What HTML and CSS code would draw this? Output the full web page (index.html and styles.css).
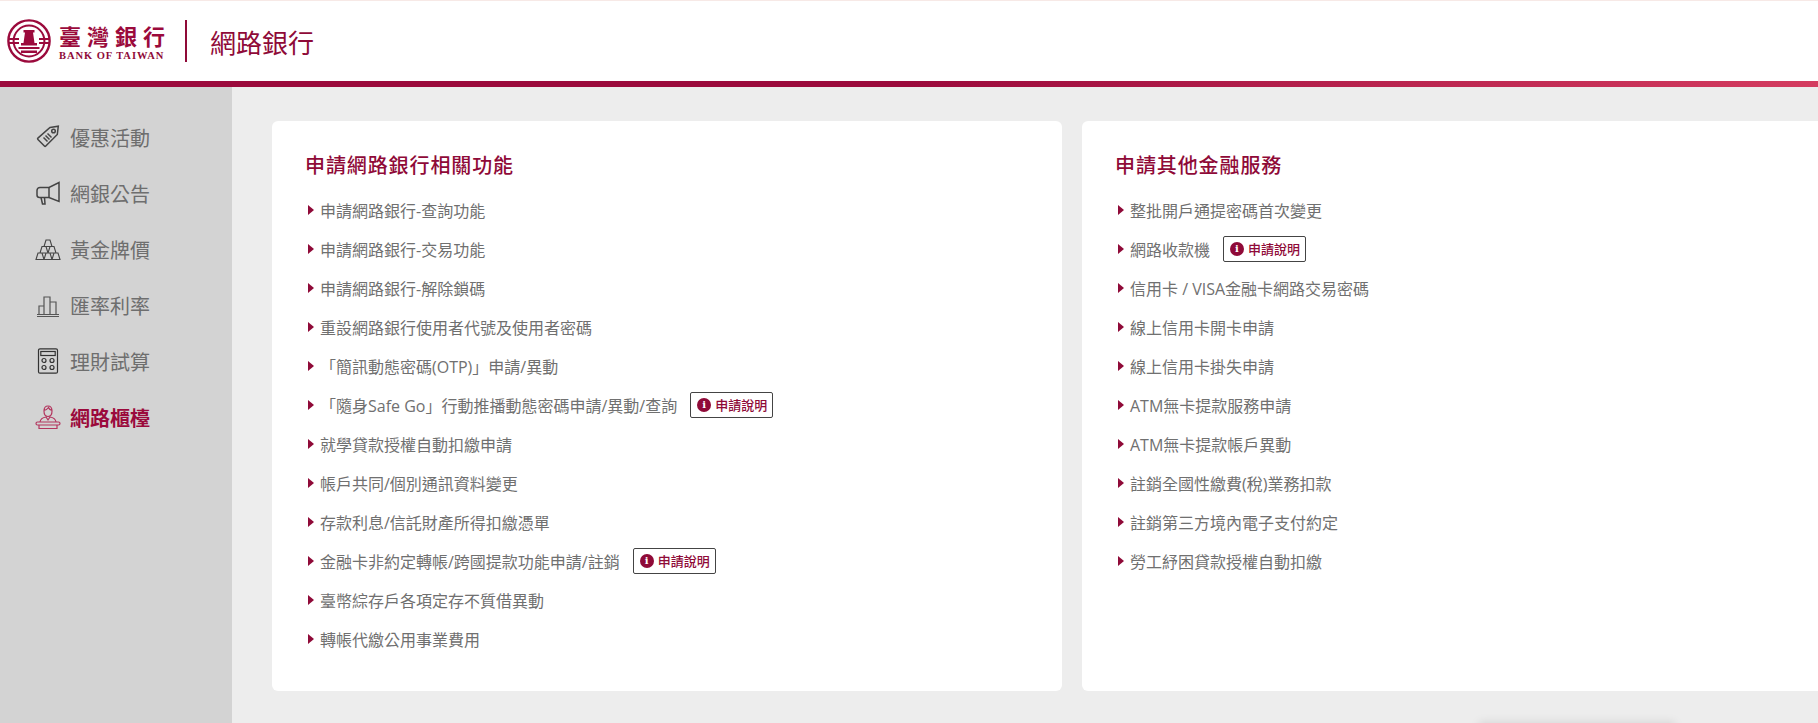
FILE: index.html
```html
<!DOCTYPE html>
<html lang="zh-Hant">
    <head>
        <meta charset="UTF-8">
        <meta name="viewport" content="width=device-width, initial-scale=1">
        <title>網路銀行</title>
        <link rel="stylesheet" href="styles.css">
    </head>
    <body>
        <header class="topbar">
            <div class="logo">
                <svg class="logo-mark" viewBox="0 0 44 44" fill="none" stroke="#9b0a3c">
                    <circle cx="22" cy="22" r="20.6" stroke-width="2.4"/>
                    <circle cx="22" cy="22" r="15.4" stroke-width="2"/>
                    <path d="M16.500 11h11v2.500h-1.500l1.500 10.500h2.500v2.500h-16v-2.500h2.500l1.500-10.500h-1.500z" fill="#9b0a3c" stroke="none"/>
                    <path d="M11.500 29h21M2 20h10M2 24h10M32 20h10M32 24h10" stroke-width="1.800"/>
                    <path d="M14 31.500h16v2.500h-16z" fill="#9b0a3c" stroke="none"/>
                </svg>
                <div class="logo-text">
                    <div class="logo-zh">臺灣銀行</div>
                    <div class="logo-en">BANK OF TAIWAN</div>
                </div>
            </div>
            <div class="topbar-title">網路銀行</div>
        </header>
        <div class="stripe"></div>
        <div class="layout">
            <nav class="sidebar">
                <a class="nav-item">
                    <svg class="nav-icon" viewBox="0 0 26 26" fill="none" stroke="#444" stroke-width="1.500">
                        <path d="M15 3.500l8.300-1.300-1 8.300-11.500 11.500a1 1 0 0 1-1.400 0l-6.500-6.500a1 1 0 0 1 0-1.400z"/>
                        <circle cx="18.500" cy="7" r="1.800"/>
                        <path d="M8.500 13.500l4 4M10.500 11.500l4 4M12.500 9.500l4 4"/>
                    </svg>
                    <span>優惠活動</span>
                </a>
                <a class="nav-item">
                    <svg class="nav-icon" viewBox="0 0 26 26" fill="none" stroke="#444" stroke-width="1.500">
                        <path d="M24 2.500v19l-10-4h-9.500a2.500 2.500 0 0 1-2.500-2.500v-4.500a3 3 0 0 1 3-3h9z"/>
                        <path d="M14 7.500v10M6 17.500l1.500 6.500h2.500l-.5-6.500"/>
                    </svg>
                    <span>網銀公告</span>
                </a>
                <a class="nav-item">
                    <svg class="nav-icon" viewBox="0 0 26 26" fill="none" stroke="#444" stroke-width="1.100">
                        <path d="M11 4h4l2 6.500h-8zM7 10.500h4l2 6.500h-8zM15 10.500h4l2 6.500h-8zM3 17h4l2 6.500h-8zM11 17h4l2 6.500h-8zM19 17h4l2 6.500h-8z"/>
                    </svg>
                    <span>黃金牌價</span>
                </a>
                <a class="nav-item">
                    <svg class="nav-icon" viewBox="0 0 26 26" fill="none" stroke="#555" stroke-width="1.200">
                        <path d="M2 22.500h22M2 24.500h22M4 22v-8h5v8M9 22v-17h6v17M15 22v-12h6v12"/>
                    </svg>
                    <span>匯率利率</span>
                </a>
                <a class="nav-item">
                    <svg class="nav-icon" viewBox="0 0 26 26" fill="none" stroke="#333" stroke-width="1.200">
                        <rect x="3.500" y="0.800" width="19" height="24.400" rx="1.500"/>
                        <rect x="5.800" y="3.500" width="14.400" height="4"/>
                        <circle cx="9" cy="12.500" r="2"/>
                        <circle cx="17" cy="12.500" r="2"/>
                        <circle cx="9" cy="19.500" r="2"/>
                        <circle cx="17" cy="19.500" r="2"/>
                    </svg>
                    <span>理財試算</span>
                </a>
                <a class="nav-item active">
                    <svg class="nav-icon" viewBox="0 0 26 26" fill="none" stroke="#b3365f" stroke-width="1.200">
                        <path d="M9 7c0-3 1.500-5 4-5s4 2 4 5-1.500 5.500-4 5.500-4-2.500-4-5.500zM9 6.500c2-.5 3.500-1.500 4.500-3 .5 1.500 2 2.500 3.500 3"/>
                        <path d="M5 18c.5-3 3-4.500 6-5l2 3 2-3c3 .5 5.500 2 6 5"/>
                        <rect x="1" y="18" width="24" height="3" rx="1.500"/>
                        <path d="M4 21v3.500h18v-3.500"/>
                    </svg>
                    <span>網路櫃檯</span>
                </a>
            </nav>
            <main class="content">
                <section class="card">
                    <h2 class="card-title">申請網路銀行相關功能</h2>
                    <ul class="links">
                        <li>申請網路銀行-查詢功能</li>
                        <li>申請網路銀行-交易功能</li>
                        <li>申請網路銀行-解除鎖碼</li>
                        <li>重設網路銀行使用者代號及使用者密碼</li>
                        <li>「簡訊動態密碼(OTP)」申請/異動</li>
                        <li>「隨身Safe Go」行動推播動態密碼申請/異動/查詢
                            <span class="badge"><i class="badge-icon">i</i>申請說明</span>
                        </li>
                        <li>就學貸款授權自動扣繳申請</li>
                        <li>帳戶共同/個別通訊資料變更</li>
                        <li>存款利息/信託財產所得扣繳憑單</li>
                        <li>金融卡非約定轉帳/跨國提款功能申請/註銷
                            <span class="badge"><i class="badge-icon">i</i>申請說明</span>
                        </li>
                        <li>臺幣綜存戶各項定存不質借異動</li>
                        <li>轉帳代繳公用事業費用</li>
                    </ul>
                </section>
                <section class="card">
                    <h2 class="card-title">申請其他金融服務</h2>
                    <ul class="links">
                        <li>整批開戶通提密碼首次變更</li>
                        <li>網路收款機
                            <span class="badge"><i class="badge-icon">i</i>申請說明</span>
                        </li>
                        <li>信用卡 / VISA金融卡網路交易密碼</li>
                        <li>線上信用卡開卡申請</li>
                        <li>線上信用卡掛失申請</li>
                        <li>ATM無卡提款服務申請</li>
                        <li>ATM無卡提款帳戶異動</li>
                        <li>註銷全國性繳費(稅)業務扣款</li>
                        <li>註銷第三方境內電子支付約定</li>
                        <li>勞工紓困貸款授權自動扣繳</li>
                    </ul>
                </section>
                <div class="bottom-shadow"></div>
            </main>
        </div>
    </body>
</html>
```

FILE: styles.css
```css
html, body {
    height: 100%;
}
body {
    margin: 0;
    display: flex;
    flex-direction: column;
    overflow: hidden;
    background-color: #ededed;
    font-family: "Open Sans", "Noto Sans CJK TC", sans-serif;
}
.topbar {
    display: flex;
    align-items: center;
    height: 80px;
    padding-left: 7px;
    background-color: #fff;
    border-top: 1px solid #f7e9e6;
}
.logo {
    display: flex;
    align-items: center;
    gap: 8px;
    height: 42px;
    padding-right: 20px;
    border-right: 2px solid #8f0a38;
}
.logo-mark {
    width: 44px;
    height: 44px;
}
.logo-text {
    width: 106px;
}
.logo-zh {
    font-family: "Noto Sans CJK TC", serif;
    font-size: 22px;
    font-weight: bold;
    line-height: 28px;
    letter-spacing: 6px;
    white-space: nowrap;
    color: #9b0a3c;
}
.logo-en {
    margin-top: 1px;
    font-family: "Liberation Serif", serif;
    font-weight: bold;
    font-size: 10.500px;
    line-height: 12px;
    letter-spacing: 0.95px;
    white-space: nowrap;
    color: #8f0a38;
}
.topbar-title {
    margin-left: 23px;
    font-family: "Noto Sans CJK TC", sans-serif;
    font-size: 26px;
    color: #8f0a38;
}
.stripe {
    height: 6px;
    flex: none;
    background: linear-gradient(to right, #9b0a3c, #9b0a3c 50%, #d43c60);
}
.layout {
    flex: 1;
    display: flex;
    min-height: 0;
}
.sidebar {
    flex: none;
    width: 232px;
    padding-top: 22px;
    box-sizing: border-box;
    background-color: #d3d3d3;
}
.nav-item {
    display: flex;
    align-items: center;
    gap: 9px;
    height: 56px;
    padding-left: 35px;
    font-size: 20px;
    color: #6e6e6e;
}
.nav-item.active {
    font-weight: bold;
    color: #9b0a3c;
}
.nav-icon {
    flex: none;
    width: 26px;
    height: 26px;
}
.content {
    position: relative;
    flex: 1;
    display: flex;
    align-items: flex-start;
    gap: 20px;
    padding: 34px 0 0 40px;
    overflow: hidden;
}
.card {
    flex: none;
    width: 790px;
    height: 570px;
    box-sizing: border-box;
    padding: 30px 33px;
    border-radius: 6px;
    background-color: #fff;
}
.card-title {
    margin: 0 0 11px;
    font-family: "Noto Sans CJK TC", sans-serif;
    font-size: 20px;
    font-weight: 500;
    line-height: 28px;
    letter-spacing: 0.900px;
    color: #8f0a38;
}
.links {
    margin: 0;
    padding: 0;
    list-style: none;
}
.links li {
    display: flex;
    align-items: center;
    height: 39px;
    font-size: 16px;
    color: #707070;
}
.links li:before {
    content: '';
    flex: none;
    width: 0;
    height: 0;
    margin: 0 6px 0 3px;
    border-left: 6px solid #8f0a38;
    border-top: 5.500px solid transparent;
    border-bottom: 5.500px solid transparent;
}
.badge {
    display: inline-flex;
    align-items: center;
    gap: 4px;
    height: 24px;
    margin-left: 13px;
    padding: 0 5px 0 6px;
    border: 1px solid #444;
    border-radius: 2px;
    font-size: 13px;
    font-weight: 500;
    color: #8f0a38;
}
.badge-icon {
    width: 14px;
    height: 14px;
    border-radius: 50%;
    background-color: #8f0a38;
    color: #fff;
    font-family: "DejaVu Serif", serif;
    font-style: normal;
    font-weight: bold;
    font-size: 10px;
    line-height: 14px;
    text-align: center;
}
.bottom-shadow {
    position: absolute;
    left: 1250px;
    bottom: -8px;
    width: 190px;
    height: 6px;
    box-shadow: 0 0 10px 3px rgba(0, 0, 0, 0.1);
}
```
